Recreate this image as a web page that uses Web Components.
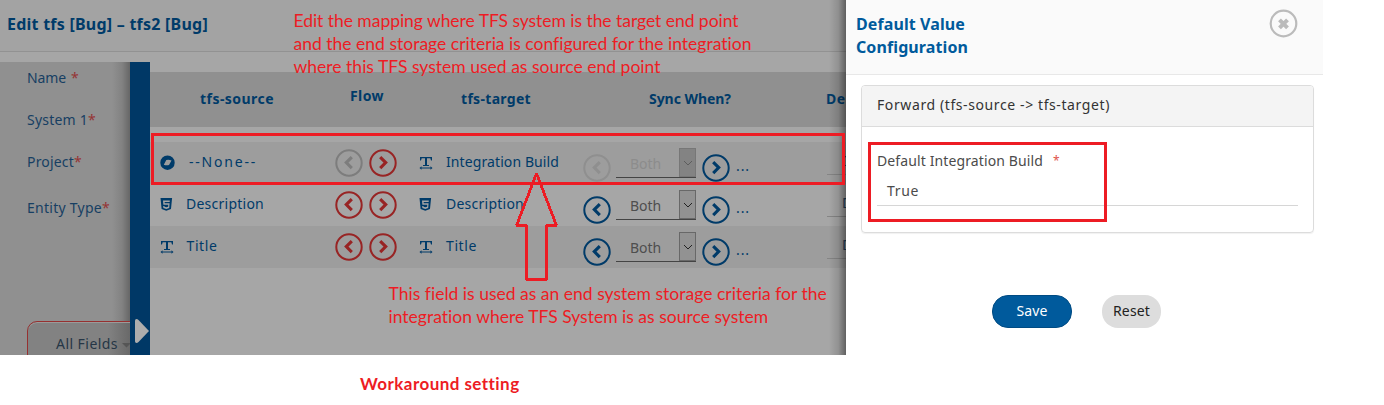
<!DOCTYPE html>
<html lang="en">
<head>
<meta charset="utf-8">
<title>Mapping editor</title>
<style>
html,body{margin:0;background:#fff;overflow:hidden}
body{width:1384px;height:405px;font-family:"Noto Sans","Open Sans",sans-serif;font-size:14px}
</style>
</head>
<body>
<mapping-page></mapping-page>
<script>
const define = (name, html, setup) => customElements.define(name, class extends HTMLElement {
  constructor() {
    super();
    const t = document.createElement('template');
    t.innerHTML = html;
    this.attachShadow({mode: 'open'}).appendChild(t.content.cloneNode(true));
  }
  connectedCallback() { if (setup) setup(this, this.shadowRoot); }
});

// Single line of text, tracked so that it spans the width in its "w" attribute.
define('fit-text', `<style>:host{display:block;white-space:nowrap;line-height:20px;flex:none}span{display:inline-block}</style><span><slot></slot></span>`, (el, root) => {
  const w = parseFloat(el.getAttribute('w'));
  if (!w) return;
  const span = root.querySelector('span');
  const n = el.textContent.length;
  span.style.letterSpacing = ((w - span.getBoundingClientRect().width) / n) + 'px';
});

define('round-arrow', `<style>:host{display:block;width:28px;height:28px;flex:none;color:#003b69}svg{display:block}:host([dir=left]) path{transform:scaleX(-1);transform-origin:14px 14px}:host([tone=red]){color:#982424}:host([tone=grey]){color:#7d7d7d}:host([tone=faint]){color:#8f8f8f}</style>
<svg width="28" height="28" viewBox="0 0 28 28" fill="none" stroke="currentColor"><circle cx="14" cy="14" r="12.7" stroke-width="2"/><path d="M11.2 8.1 16.7 13.6 11.2 19.1" stroke-width="3.1"/></svg>`);

const ICONS = {
  text: '<path d="M1 1h12v3.6h-1L11.3 2.3H8V9h2v1H4V9h2V2.3H2.700L2 4.600H1z"/><path d="M.5 12l2-1.700v1.200h9v-1.200l2 1.700-2 1.700v-1.200h-9v1.200z"/>',
  html: '<path fill-rule="evenodd" d="M.5 0h11.600l-1.100 11L6.300 12.700 1.600 11zM3 2.500l.4 4.200h4.900l-.2 2-1.800.6-1.800-.6-.1-.8H3.200l.2 2 2.900 1 2.900-1 .4-4.700H4.700L4.600 4h5.100l.1-1.500z"/>',
  spot: '<path fill-rule="evenodd" d="M7.500-.5a7.200 7.200 0 1 1 0 14.400A7.200 7.200 0 0 1 7.500-.5zM6.300 4 3.800 8.700q2.500.9 5.200.3l2.500-4.600q-2.500-.9-5.200-.4z"/>'
};
define('field-icon', `<style>:host{display:block;width:16px;height:15px;flex:none;color:#003b69}svg{display:block;overflow:visible}</style><svg width="16" height="15" fill="currentColor"></svg>`, (el, root) => {
  root.querySelector('svg').innerHTML = ICONS[el.getAttribute('name')];
});

define('pick-box', `<style>
:host{display:flex;width:80px;height:30px;box-sizing:border-box;border-bottom:1px solid #444;color:#4e4e4e;flex:none}
div{flex:1;padding:6px 0 0 14px}
i{width:17px;height:29px;box-sizing:border-box;border:1px solid #686868;background:#929292;display:grid;place-items:center}
:host([off]){color:#8c8c8c}:host([off]) i{background:#838383;border-color:#777;color:#5d5d5d}:host(:not([off])) i{color:#222}
</style><div><fit-text w="31">Both</fit-text></div><i><svg width="10" height="8" fill="none" stroke="currentColor"><path d="M1 2l4 4 4-4"/></svg></i>`);

define('mapping-row', `<style>
:host{display:grid;grid-template-columns:36px 149px 84px 27px 137px 244px 40px;height:42px;color:#003b69}
:host([shade]){background:#9d9d9d}
.ic{padding:14px 0 0 10px}.tic{padding:14px 0 0}.nm{padding-top:10px}.flow{display:flex;gap:6px;padding-top:7px}
.sync{display:flex}.sync round-arrow{margin-top:12px}.sync pick-box{margin:6px 6px 0 5px}.dots{padding:14px 0 0 6px}
.def{margin-top:9px;height:23px;border-bottom:1px solid #858585;padding-left:15px;color:#264560}
</style>
<div class="ic"><slot name="icon"></slot></div><div class="nm"><slot name="source"></slot></div>
<div class="flow"><round-arrow id="back" dir="left" tone="red"></round-arrow><round-arrow tone="red"></round-arrow></div>
<div class="tic"><slot name="ticon"></slot></div><div class="nm"><slot name="target"></slot></div>
<div class="sync"><round-arrow id="sback" dir="left"></round-arrow><pick-box></pick-box><round-arrow></round-arrow><div class="dots"><fit-text w="14">...</fit-text></div></div>
<div class="def"><fit-text>D</fit-text></div>`, (el, root) => {
  if (!el.hasAttribute('oneway')) return;
  root.getElementById('back').setAttribute('tone', 'grey');
  root.getElementById('sback').setAttribute('tone', 'faint');
  root.querySelector('pick-box').setAttribute('off', '');
});

define('side-panel', `<style>
:host{display:block;width:130px;box-sizing:border-box;overflow:hidden;padding:6px 0 0 27px;color:#173f63;background:linear-gradient(90deg,transparent 112px,#828282 122px,#666),#909090}
div{display:flex;height:42px}div.t{height:46px}b{font-weight:400;color:#963434;line-height:20px}
.btn{height:60px;width:130px;box-sizing:border-box;margin-top:81px;border:1px solid #963030;border-radius:10px;box-shadow:inset 0 1px #9a9a9a;padding:12px 0 0 28px;background:linear-gradient(90deg,#828282 80px,#686868 103px);color:#263646}
.btn svg{margin:9px 0 0 4px}
</style>
<div><fit-text w="39">Name</fit-text><b style="margin-left:5px">*</b></div><div><fit-text w="61">System 1</fit-text><b>*</b></div>
<div class="t"><fit-text w="47">Project</fit-text><b>*</b></div><div><fit-text w="75">Entity Type</fit-text><b>*</b></div>
<div class="btn"><fit-text w="62">All Fields</fit-text><svg width="9" height="5"><path d="M0 0h9L4.500 4.500z" fill="#555"/></svg></div>`);

define('mapping-table', `<style>
:host{display:block;width:696px;overflow:hidden;padding-top:10px}
header{display:grid;grid-template-columns:50px 150px 111px 188px 177px 40px;height:55px;background:#909090;margin-bottom:15px;font-weight:700;color:#003b69;padding-top:17px;box-sizing:border-box}
.f{margin-top:-3px}
</style>
<header><span></span><fit-text w="74">tfs-source</fit-text><fit-text class="f" w="34">Flow</fit-text><fit-text w="70">tfs-target</fit-text><fit-text w="82">Sync When?</fit-text><fit-text w="19.500">De</fit-text></header>
<mapping-row shade oneway><field-icon slot="icon" name="spot"></field-icon><fit-text slot="source" style="margin-left:3px" w="68">--None--</fit-text><field-icon slot="ticon" name="text"></field-icon><fit-text slot="target" w="113">Integration Build</fit-text></mapping-row>
<mapping-row><field-icon slot="icon" name="html"></field-icon><fit-text slot="source" w="78">Description</fit-text><field-icon slot="ticon" name="html"></field-icon><fit-text slot="target" w="78">Description</fit-text></mapping-row>
<mapping-row shade><field-icon slot="icon" name="text"></field-icon><fit-text slot="source" style="margin-left:.5px" w="31">Title</fit-text><field-icon slot="ticon" name="text"></field-icon><fit-text slot="target" w="31">Title</fit-text></mapping-row>`);

define('mapping-editor', `<style>
:host{display:flex;flex-direction:column;position:relative;width:846px;height:355px;background:#a6a6a6;overflow:hidden}
:host::after{content:"";position:absolute;right:0;top:0;bottom:0;width:17px;background:linear-gradient(90deg,rgba(0,0,0,0),rgba(0,0,0,.12) 55%,rgba(0,0,0,.42))}
.title{height:51px;flex:none;background:#a3a3a3;border-bottom:1px solid #929292;box-sizing:content-box;padding-left:7px;font-weight:700;font-size:16px;color:#003b69}
.title fit-text{padding-top:14px}
main{display:flex;flex:1;margin-top:10px;min-height:0}
.bar{width:20px;background:#003866;flex:none}.bar svg{display:block;margin:257px 0 0 5px}
</style>
<div class="title"><fit-text w="201">Edit tfs [Bug] – tfs2 [Bug]</fit-text></div>
<main><side-panel></side-panel><div class="bar"><svg width="15" height="24"><path d="M1.500 0q1 0 2 1L14 12 3.500 23q-1 1-2 1T0 22.500v-21Q0 0 1.500 0z" fill="#adadad"/></svg></div><mapping-table></mapping-table></main>`);

define('pill-button', `<style>:host{display:flex;box-sizing:border-box;height:33px;border-radius:16px;align-items:center;justify-content:center;width:59px;background:#ddd;color:#222;padding-bottom:2px}:host([primary]){width:80px;background:#005a9c;border:1px solid #004b83;color:#fff}</style><slot></slot>`);

define('value-panel', `<style>
:host{display:block;width:477px;height:355px;background:#fff}
header{height:74px;background:#fafafa;border-bottom:1px solid #e8e8e8;display:flex;justify-content:space-between;padding:0 25px 0 10px;font-weight:700;font-size:16px;color:#005a9c}
header fit-text{line-height:23px}.t{padding-top:13px}header svg{margin-top:9px}
.card{margin:10px 9px 0 15px;height:148px;box-sizing:border-box;border:1px solid #dcdcdc;border-radius:4px;box-shadow:0 1px 1px rgba(0,0,0,.06);color:#4b4b4b}
.hd{background:#f4f4f4;border-bottom:1px solid #dcdcdc;border-radius:3px 3px 0 0;color:#333;padding:9px 0 0 15px;box-sizing:border-box;height:41px}
.lb{display:flex;padding:24px 0 0 15px}.lb b{font-weight:400;font-size:12px;color:#e0524a;margin-left:10px;line-height:20px}
.in{margin:3px 15px 0;height:32px;border-bottom:1px solid #d6d6d6;padding:7px 0 0 10px;box-sizing:border-box}
.bt{display:flex;gap:30px;padding:62px 0 0 146px}
</style>
<header><div class="t"><fit-text w="109">Default Value</fit-text><fit-text w="112">Configuration</fit-text></div>
<svg width="29" height="29" fill="none" stroke="#bbb"><circle cx="14.500" cy="14.500" r="12.800" stroke-width="2.200"/><path d="M10.500 10.800l8 8M18.500 10.800l-8 8" stroke-width="4"/></svg></header>
<div class="card"><div class="hd"><fit-text w="233">Forward (tfs-source -&gt; tfs-target)</fit-text></div>
<div class="lb"><fit-text w="166">Default Integration Build</fit-text><b>*</b></div><div class="in"><fit-text w="32">True</fit-text></div></div>
<div class="bt"><pill-button primary><fit-text w="31">Save</fit-text></pill-button><pill-button><fit-text w="37">Reset</fit-text></pill-button></div>`);

// Red remarks, frames and arrow drawn freely over the screen.
define('red-notes', `<style>
:host{position:absolute;inset:0;color:#ed1c24;font-family:Lato,"Open Sans",sans-serif;font-size:17.500px}
div,svg{position:absolute}.frame{border:3px solid #ed1c24;box-sizing:border-box}
fit-text{line-height:23px}
</style>
<div style="left:293.500px;top:9px"><fit-text w="445">Edit the mapping where TFS system is the target end point</fit-text><fit-text w="458">and the end storage criteria is configured for the integration</fit-text><fit-text w="367">where this TFS system used as source end point</fit-text></div>
<div style="left:388.500px;top:282px"><fit-text w="438">This field is used as an end system storage criteria for the</fit-text><fit-text w="380">integration where TFS System is as source system</fit-text></div>
<div class="frame" style="left:151px;top:133px;width:694px;height:52px"></div>
<div class="frame" style="left:868px;top:142px;width:239px;height:80px"></div>
<svg style="left:510px;top:168px" width="54" height="116" fill="none" stroke="#ed1c24" stroke-width="2.800" shape-rendering="crispEdges"><path d="M26.500 5.500 46.500 57.500H36.500V111.500H16.500V57.500H6.500z" stroke-linejoin="bevel"/></svg>`);

define('mapping-page', `<style>
:host{display:block;position:relative;width:1384px;height:405px;overflow:hidden}
.screen{display:flex}
.cap{padding:17px 0 0 360px;color:#ed1c24;font:700 17px/23px Lato,"Open Sans",sans-serif}
.cap fit-text{line-height:23px}
</style><div class="screen"><mapping-editor></mapping-editor><value-panel></value-panel></div><div class="cap"><fit-text w="159">Workaround setting</fit-text></div><red-notes></red-notes>`);
</script>
</body>
</html>
